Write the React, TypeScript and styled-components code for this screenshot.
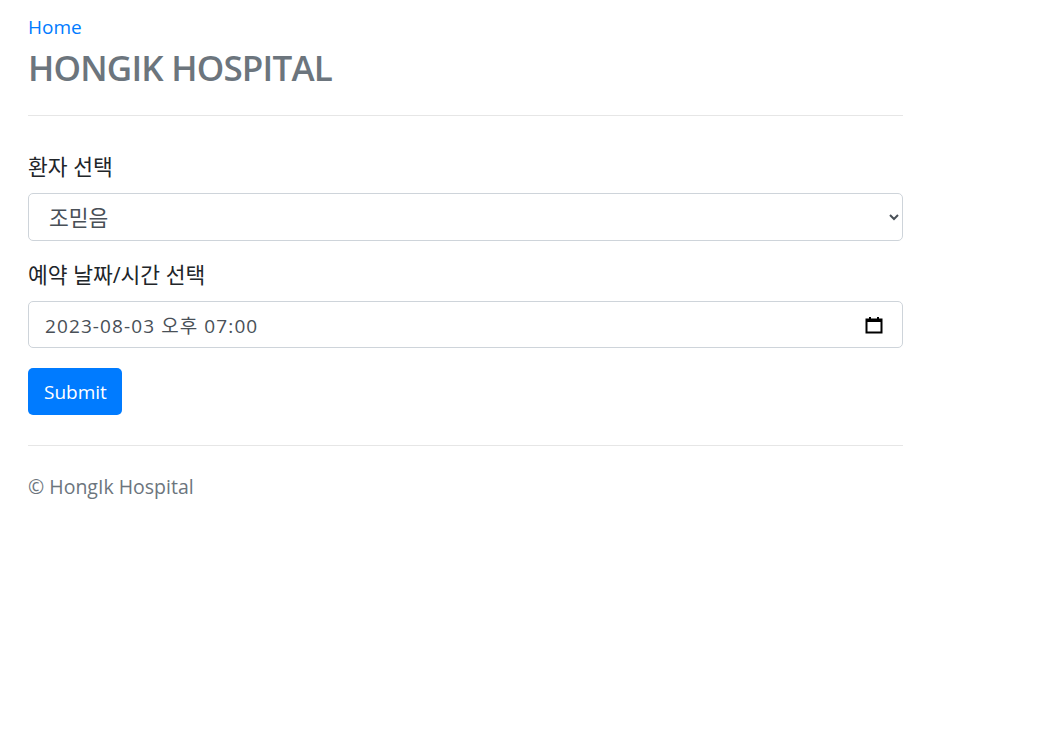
import React from "react";
import styled, { createGlobalStyle } from "styled-components";

const Global = createGlobalStyle`
  html, body { margin: 0; padding: 0; background: #fff; }
  body {
    font-family: "Open Sans", "Noto Sans CJK KR", sans-serif;
    color: #212529;
    font-size: 20px;
    line-height: 30px;
  }
  * { box-sizing: border-box; }
`;

const Page = styled.div`
  width: 875px;
  margin-left: 28px;
  padding-top: 12px;
  display: flex;
  flex-direction: column;
`;

const HomeLink = styled.a`
  color: #007bff;
  text-decoration: none;
  font-size: 19px;
  line-height: 30px;
  align-self: flex-start;
`;

const Title = styled.h1`
  margin: 2px 0 0;
  font-size: 35px;
  font-weight: 600;
  letter-spacing: -0.8px;
  line-height: 47px;
  color: #6c757d;
`;

const Rule = styled.hr<{ $top: number }>`
  margin: ${(p) => p.$top}px 0 0;
  border: 0;
  border-top: 1px solid #e6e6e6;
  height: 0;
`;

const Form = styled.form`
  display: flex;
  flex-direction: column;
  margin-top: 36px;
`;

const Group = styled.div`
  display: flex;
  flex-direction: column;
  margin-bottom: 19px;
`;

const Label = styled.label`
  font-size: 21.5px;
  line-height: 30px;
  margin-bottom: 11px;
  color: #212529;
`;

const Select = styled.select`
  height: 48px;
  width: 100%;
  border: 1px solid #ced4da;
  border-radius: 5px;
  padding: 0 15px 0 16px;
  font-family: "Open Sans", "Noto Sans CJK KR", sans-serif;
  font-size: 21.5px;
  color: #495057;
  background: #fff;
`;

const DateBox = styled.div`
  height: 47px;
  display: flex;
  align-items: center;
  border: 1px solid #ced4da;
  border-radius: 5px;
  padding: 0 19px 0 16px;
  background: #fff;
`;

const DateInput = styled.input`
  flex: 1;
  border: 0;
  outline: none;
  padding: 0;
  font-family: "Open Sans", "Noto Sans CJK KR", sans-serif;
  font-size: 19px;
  letter-spacing: 1.1px;
  color: #495057;
  background: transparent;
`;

const Button = styled.button`
  align-self: flex-start;
  margin-top: 1px;
  height: 47px;
  padding: 0 15px 0 16px;
  border: 0;
  border-radius: 5px;
  background: #007bff;
  color: #fff;
  font-family: "Open Sans", sans-serif;
  font-size: 19px;
  cursor: pointer;
`;

const Footer = styled.footer`
  margin-top: 26px;
  color: #6c757d;
  font-size: 19.5px;
  line-height: 30px;
`;

const CalendarIcon = () => (
  <svg width="18" height="18" viewBox="0 0 18 18" aria-hidden>
    <rect x="1.5" y="3.5" width="15" height="13" fill="none" stroke="#000" strokeWidth="2" />
    <rect x="1" y="3" width="16" height="3" fill="#000" />
    <rect x="4" y="1" width="2" height="3" fill="#000" />
    <rect x="12" y="1" width="2" height="3" fill="#000" />
  </svg>
);

export default function App() {
  return (
    <>
      <Global />
      <Page>
        <HomeLink href="#">Home</HomeLink>
        <Title>HONGIK HOSPITAL</Title>
        <Rule $top={24} />
        <Form onSubmit={(e) => e.preventDefault()}>
          <Group>
            <Label htmlFor="patient">환자 선택</Label>
            <Select id="patient" defaultValue="1">
              <option value="1">조믿음</option>
            </Select>
          </Group>
          <Group>
            <Label htmlFor="date">예약 날짜/시간 선택</Label>
            <DateBox>
              <DateInput id="date" readOnly value="2023-08-03 오후 07:00" />
              <CalendarIcon />
            </DateBox>
          </Group>
          <Button type="submit">Submit</Button>
        </Form>
        <Rule $top={30} />
        <Footer>© HongIk Hospital</Footer>
      </Page>
    </>
  );
}
